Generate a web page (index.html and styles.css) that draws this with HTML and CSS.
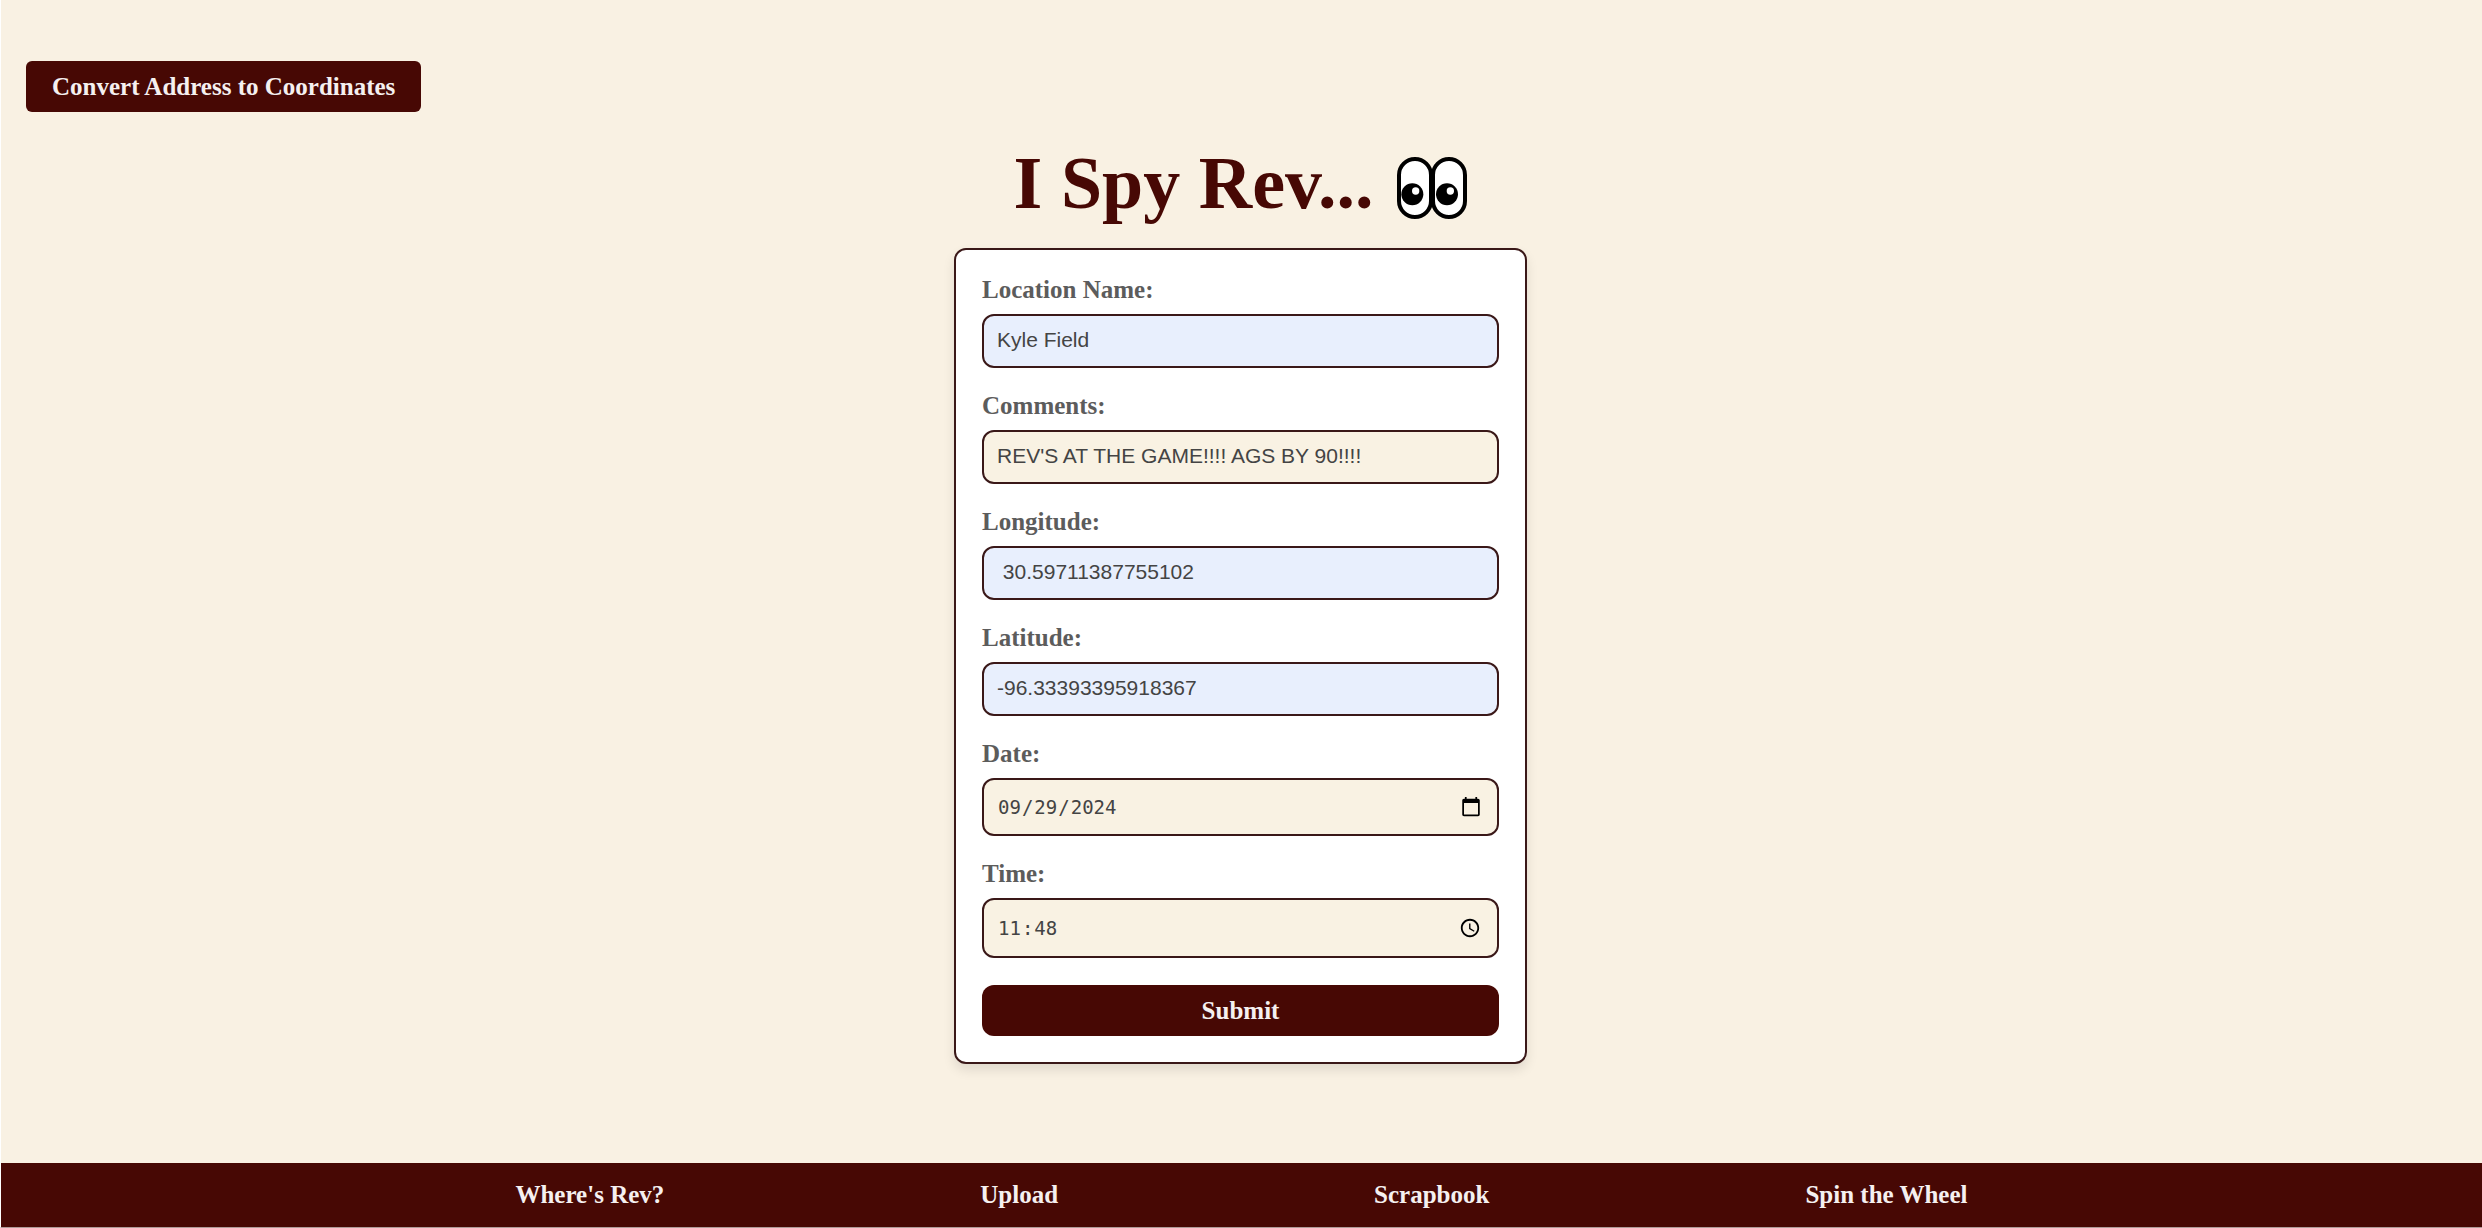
FILE: index.html
```html
<!DOCTYPE html>
<html lang="en">
<head>
    <meta charset="UTF-8">
    <meta name="viewport" content="width=device-width, initial-scale=1.0">
    <title>I Spy Rev</title>
    <link rel="stylesheet" href="styles.css">
</head>
<body>

<main>
    <button type="button" class="convert-btn">Convert Address to Coordinates</button>

    <h1>
        I Spy Rev...
        <svg class="eyes" viewBox="0 0 210 186" aria-hidden="true">
            <rect x="6" y="6" width="96" height="174" rx="48" fill="#fff" stroke="#000" stroke-width="12"/>
            <rect x="108" y="6" width="96" height="174" rx="48" fill="#fff" stroke="#000" stroke-width="12"/>
            <circle cx="46" cy="112" r="33"/>
            <circle cx="150" cy="112" r="33"/>
            <circle cx="56" cy="102" r="11" fill="#fff"/>
            <circle cx="160" cy="102" r="11" fill="#fff"/>
        </svg>
    </h1>

    <form class="spy-form">
        <div class="field">
            <label for="location">Location Name:</label>
            <input type="text" id="location" class="filled" value="Kyle Field">
        </div>
        <div class="field">
            <label for="comments">Comments:</label>
            <input type="text" id="comments" value="REV'S AT THE GAME!!!! AGS BY 90!!!!">
        </div>
        <div class="field">
            <label for="longitude">Longitude:</label>
            <input type="text" id="longitude" class="filled" value=" 30.59711387755102">
        </div>
        <div class="field">
            <label for="latitude">Latitude:</label>
            <input type="text" id="latitude" class="filled" value="-96.33393395918367">
        </div>
        <div class="field">
            <label for="date">Date:</label>
            <input type="date" id="date" value="2024-09-29">
        </div>
        <div class="field">
            <label for="time">Time:</label>
            <input type="time" id="time" value="11:48">
        </div>
        <button type="submit" class="submit-btn">Submit</button>
    </form>
</main>

<nav class="bottom-nav">
    <a href="#">Where's Rev?</a>
    <a href="#">Upload</a>
    <a href="#">Scrapbook</a>
    <a href="#">Spin the Wheel</a>
</nav>

</body>
</html>
```
FILE: styles.css
```css
* {
    box-sizing: border-box;
}
body {
    font-family: "Liberation Serif", serif;
    font-size: 25px;
    line-height: 32px;
    background-color: #f9f1e3;
    margin: 0;
    min-height: 100vh;
    display: flex;
    flex-direction: column;
    border-left: 1px solid #fff;
    border-bottom: 1px solid #b09a98;
}
main {
    flex: 1;
    padding: 61px 27px 40px 25px;
}
button {
    display: block;
    font-family: inherit;
    font-size: 25px;
    line-height: 31px;
    font-weight: bold;
    color: #f5f0f0;
    background-color: #470804;
    border: none;
    cursor: pointer;
}
.convert-btn {
    padding: 10px 26px;
    border-radius: 6px;
}
h1 {
    display: flex;
    justify-content: center;
    align-items: center;
    gap: 24px;
    margin: 31px 0 25px;
    font-size: 74px;
    line-height: 80px;
    color: #470804;
}
.eyes {
    width: 70px;
    height: 62px;
    margin-top: 10px;
}
.spy-form {
    max-width: 573px;
    margin: 0 auto;
    padding: 24px 26px 26px;
    background: white;
    border: 2px solid #3a1818;
    border-radius: 12px;
    box-shadow: 0 6px 12px rgba(0, 0, 0, 0.1);
}
.field {
    margin-bottom: 22px;
}
label {
    display: block;
    margin-bottom: 8px;
    font-weight: bold;
    color: #5c5c5c;
}
input {
    display: block;
    width: 100%;
    height: 54px;
    padding: 0 13px 2px;
    font-family: "Liberation Sans", Arial, sans-serif;
    font-size: 21px;
    color: #444;
    background-color: #f9f2e3;
    border: 2px solid #3a1818;
    border-radius: 12px;
}
input.filled {
    background-color: #e8effd;
}
input[type="date"],
input[type="time"] {
    height: 58px;
    padding-bottom: 0;
    font-family: "DejaVu Sans Mono", monospace;
    font-size: 19px;
}
input[type="time"] {
    height: 60px;
}
input::-webkit-calendar-picker-indicator {
    width: 22px;
    height: 22px;
}
input::-webkit-datetime-edit-ampm-field {
    display: none;
}
.submit-btn {
    width: 100%;
    margin-top: 27px;
    padding: 10px;
    border-radius: 12px;
}
.bottom-nav {
    display: flex;
    justify-content: space-evenly;
    padding: 16px 8%;
    background-color: #470804;
}
.bottom-nav a {
    color: #f5f0f0;
    font-weight: bold;
    text-decoration: none;
}
```
